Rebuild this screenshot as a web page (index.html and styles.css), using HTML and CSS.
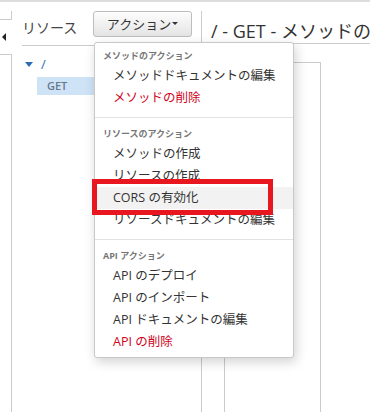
FILE: index.html
```html
<!DOCTYPE html>
<html lang="ja">
<head>
    <meta charset="UTF-8">
    <meta name="viewport" content="width=device-width, initial-scale=1.0">
    <title>API Gateway - リソース</title>
    <link rel="stylesheet" href="styles.css">
</head>
<body>
    <div class="app">
        <div class="topbar"></div>
        <div class="page">
            <div class="rail">
                <div class="rail-top"></div>
                <div class="rail-toggle"><span class="arrow-left"></span></div>
                <div class="rail-body"></div>
            </div>

            <div class="resources">
                <div class="res-header">
                    <span class="res-title">リソース</span>
                    <button class="action-btn">アクション<span class="caret"></span></button>
                </div>
                <div class="tree">
                    <div class="tree-root"><span class="arrow-down"></span><span class="root-path">/</span></div>
                    <div class="tree-method selected">GET</div>
                </div>
            </div>

            <div class="detail">
                <div class="detail-title">/ - GET - メソッドの実行</div>
                <div class="detail-body">
                    <div class="inner-box"></div>
                </div>
            </div>
        </div>

        <div class="menu">
            <div class="menu-section first">
                <div class="menu-header">メソッドのアクション</div>
                <div class="menu-item">メソッドドキュメントの編集</div>
                <div class="menu-item danger">メソッドの削除</div>
            </div>
            <div class="menu-section">
                <div class="menu-header">リソースのアクション</div>
                <div class="menu-item">メソッドの作成</div>
                <div class="menu-item">リソースの作成</div>
                <div class="menu-item hover">CORS の有効化</div>
                <div class="menu-item">リソースドキュメントの編集</div>
            </div>
            <div class="menu-section last">
                <div class="menu-header">API アクション</div>
                <div class="menu-item">API のデプロイ</div>
                <div class="menu-item">API のインポート</div>
                <div class="menu-item">API ドキュメントの編集</div>
                <div class="menu-item danger">API の削除</div>
            </div>
        </div>

        <!-- annotation around the highlighted item -->
        <div class="callout"></div>
    </div>
</body>
</html>
```

FILE: styles.css
```css
html, body {
    margin: 0;
    padding: 0;
    background: #fff;
}
body {
    font-family: "Open Sans", "Noto Sans CJK JP", sans-serif;
    color: #333;
}
.app {
    position: relative;
    width: 370px;
    height: 412px;
    overflow: hidden;
}
.topbar {
    height: 2px;
    background: #ddd;
}
.page {
    display: flex;
    height: 410px;
}

/* collapsed side rail */
.rail {
    width: 12px;
    display: flex;
    flex-direction: column;
}
.rail-top {
    margin-top: 9px;
    height: 8px;
    border-right: 1px solid #ccc;
    border-bottom: 1px solid #ccc;
}
.rail-toggle {
    height: 34px;
    padding-left: 2px;
    display: flex;
    align-items: center;
}
.arrow-left {
    width: 0;
    height: 0;
    border-top: 4px solid transparent;
    border-bottom: 4px solid transparent;
    border-right: 4px solid #222;
}
.rail-body {
    flex: 1;
    border-top: 1px solid #ccc;
    border-right: 1px solid #ccc;
}

/* resource tree column */
.resources {
    width: 189px;
}
.res-header {
    margin-left: 10px;
    height: 42px;
    padding-top: 1px;
    padding-right: 9px;
    display: flex;
    align-items: center;
    justify-content: space-between;
    border-bottom: 1px solid #ccc;
}
.res-title {
    font-size: 14px;
    color: #444;
    margin-top: 5px;
}
.action-btn {
    width: 99px;
    height: 26px;
    margin-top: -1px;
    padding: 0;
    font-family: inherit;
    font-size: 13px;
    color: #333;
    background: linear-gradient(#fdfdfd, #e4e4e4);
    border: 1px solid #bdbdbd;
    border-radius: 3px;
    box-shadow: inset 0 1px 0 #fff;
    display: flex;
    align-items: center;
    justify-content: center;
}
.caret {
    margin-left: 1px;
    width: 0;
    height: 0;
    border-left: 3px solid transparent;
    border-right: 3px solid transparent;
    border-top: 3px solid #333;
}
.tree {
    padding-left: 13px;
}
.tree-root {
    margin-top: 10px;
    height: 16px;
    display: flex;
    align-items: center;
}
.arrow-down {
    width: 0;
    height: 0;
    border-left: 4px solid transparent;
    border-right: 4px solid transparent;
    border-top: 5px solid #2b6cb5;
}
.root-path {
    margin-left: 8px;
    font-size: 13px;
    color: #2b6cb5;
}
.tree-method {
    margin-top: 5px;
    margin-left: 12px;
    height: 18px;
    line-height: 18px;
    padding-left: 10px;
    font-size: 11px;
    font-weight: 600;
    color: #66788f;
}
.tree-method.selected {
    background: #cfe3f7;
}

/* method detail pane */
.detail {
    flex: 1;
    margin-top: 9px;
    border-left: 1px solid #ccc;
    min-width: 0;
}
.detail-title {
    padding: 10px 0 2px 9px;
    line-height: 20px;
    font-size: 18px;
    color: #333;
    white-space: nowrap;
    overflow: hidden;
    border-bottom: 1px solid #ccc;
}
.detail-body {
    padding-left: 22px;
}
.inner-box {
    box-sizing: border-box;
    width: 97px;
    height: 400px;
    margin-top: 18px;
    border: 1px solid #ccc;
    border-bottom: none;
}

/* actions dropdown */
.menu {
    position: absolute;
    left: 94px;
    top: 42px;
    width: 200px;
    box-sizing: border-box;
    background: #fff;
    border: 1px solid #c8c8c8;
    border-radius: 3px;
    box-shadow: 2px 4px 12px rgba(0, 0, 0, 0.18);
}
.menu-section {
    padding: 9px 0 8px;
    border-top: 1px solid #e2e2e2;
}
.menu-section.first {
    padding-top: 6px;
    border-top: none;
}
.menu-section.last {
    padding-bottom: 4px;
}
.menu-header {
    height: 14px;
    line-height: 14px;
    margin-bottom: 2px;
    padding-left: 8px;
    font-size: 9px;
    font-weight: bold;
    color: #777;
}
.menu-item {
    height: 22px;
    line-height: 22px;
    padding-left: 18px;
    font-size: 12.5px;
    color: #333;
    white-space: nowrap;
}
.menu-item.danger {
    color: #d0021b;
}
.menu-item.hover {
    background: #f2f2f2;
}

.callout {
    position: absolute;
    left: 92px;
    top: 179px;
    width: 181px;
    height: 36px;
    box-sizing: border-box;
    border: 5px solid #e8161e;
}
```
